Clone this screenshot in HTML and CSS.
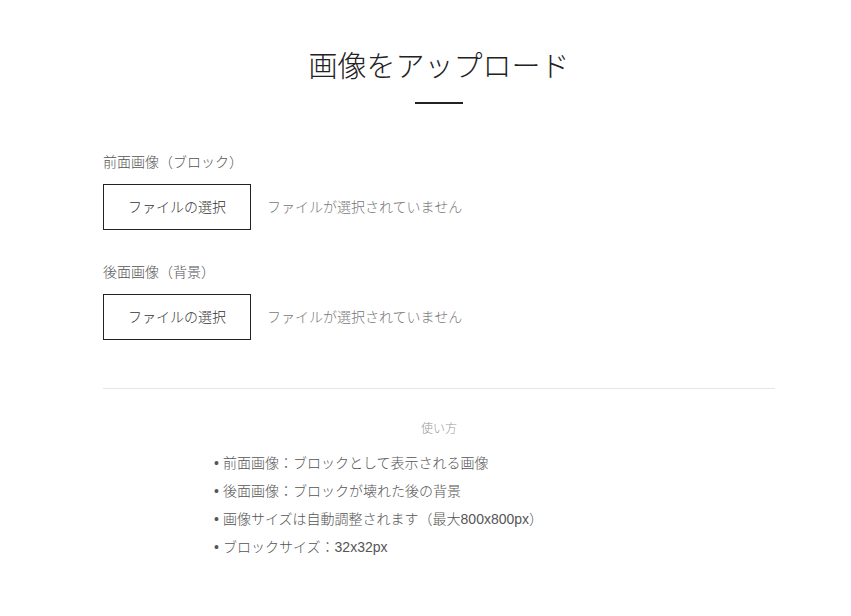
FILE: index.html
```html
<!DOCTYPE html>
<html lang="ja">
<head>
<meta charset="utf-8">
<title>画像をアップロード</title>
<link rel="stylesheet" href="styles.css">
</head>
<body>
<main class="page">
  <h1 class="title">画像をアップロード</h1>
  <div class="title-rule"></div>

  <section class="field field-first">
    <div class="field-label">前面画像（ブロック）</div>
    <div class="file-row">
      <button class="file-btn" type="button">ファイルの選択</button>
      <span class="file-status">ファイルが選択されていません</span>
    </div>
  </section>

  <section class="field">
    <div class="field-label">後面画像（背景）</div>
    <div class="file-row">
      <button class="file-btn" type="button">ファイルの選択</button>
      <span class="file-status">ファイルが選択されていません</span>
    </div>
  </section>

  <hr class="divider">

  <section class="usage">
    <div class="usage-title">使い方</div>
    <ul class="usage-list">
      <li>前面画像：ブロックとして表示される画像</li>
      <li>後面画像：ブロックが壊れた後の背景</li>
      <li>画像サイズは自動調整されます（最大800x800px）</li>
      <li>ブロックサイズ：32x32px</li>
    </ul>
  </section>
</main>
</body>
</html>
```

FILE: styles.css
```css
html, body {
  margin: 0;
  padding: 0;
  background: #ffffff;
}

body {
  font-family: "Liberation Sans", "Noto Sans CJK JP", sans-serif;
  font-weight: 300;
  color: #333333;
}

.page {
  width: 672px;
  margin-left: 103px;
  padding-top: 49px;
}

.title {
  margin: 0;
  font-size: 29px;
  line-height: 36px;
  font-weight: 300;
  text-align: center;
  color: #222222;
}

.title-rule {
  width: 48px;
  height: 2px;
  background: #222222;
  margin: 17px auto 0;
}

.field {
  margin-top: 32px;
}

.field-first {
  margin-top: 48px;
}

.field-label {
  font-size: 14px;
  line-height: 20px;
  color: #555555;
}

.file-row {
  display: flex;
  align-items: center;
  gap: 16px;
  margin-top: 12px;
}

.file-btn {
  box-sizing: border-box;
  width: 148px;
  height: 46px;
  border: 1px solid #222222;
  background: #ffffff;
  font-family: inherit;
  font-weight: 300;
  font-size: 14px;
  line-height: 20px;
  color: #333333;
  padding: 0 0 1px;
  cursor: pointer;
}

.file-status {
  font-size: 14px;
  line-height: 20px;
  padding-bottom: 1px;
  color: #777777;
}

.divider {
  border: 0;
  height: 1px;
  background: #e6e6e6;
  margin: 48px 0 0;
}

.usage {
  margin-top: 31px;
}

.usage-title {
  text-align: center;
  font-size: 12px;
  line-height: 18px;
  color: #999999;
}

.usage-list {
  list-style: none;
  width: 450px;
  margin: 11px auto 0;
  padding: 0;
}

.usage-list li {
  font-size: 14px;
  line-height: 28px;
  color: #555555;
}

.usage-list li::before {
  content: "•";
  display: inline-block;
  width: 9px;
  color: #555555;
}
```
